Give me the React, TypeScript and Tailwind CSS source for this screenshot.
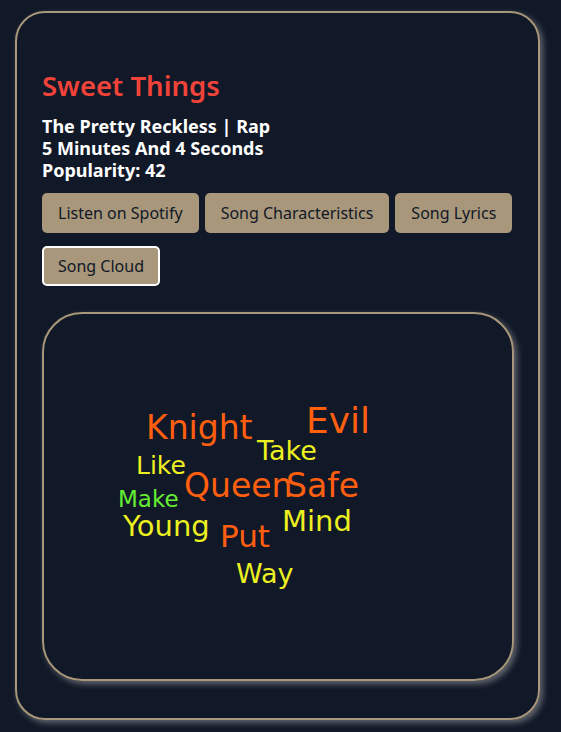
const words = [
  { text: 'Knight', left: 102, top: 97, size: 33, color: 'text-[#ff5f0f]' },
  { text: 'Evil', left: 262, top: 89, size: 36, color: 'text-[#ff5f0f]' },
  { text: 'Take', left: 213, top: 123, size: 27, color: 'text-[#ecf020]' },
  { text: 'Like', left: 92, top: 139, size: 25, color: 'text-[#ecf020]' },
  { text: 'Queen', left: 140, top: 155, size: 33, color: 'text-[#ff5f0f]' },
  { text: 'Safe', left: 242, top: 155, size: 33, color: 'text-[#ff5f0f]' },
  { text: 'Make', left: 74, top: 174, size: 23, color: 'text-[#66ee33]' },
  { text: 'Young', left: 79, top: 198, size: 29, color: 'text-[#ecf020]' },
  { text: 'Mind', left: 238, top: 193, size: 29, color: 'text-[#ecf020]' },
  { text: 'Put', left: 176, top: 207, size: 31, color: 'text-[#ff5f0f]' },
  { text: 'Way', left: 192, top: 246, size: 27, color: 'text-[#ecf020]' },
];

const buttons = ['Listen on Spotify', 'Song Characteristics', 'Song Lyrics'];

export default function App() {
  return (
    <div className="min-h-[732px] bg-[#111827] pt-[11px] pl-[15px] font-['Noto_Sans',sans-serif]">
      <div className="w-[525px] h-[709px] rounded-[30px] border-2 border-[#a8977a] shadow-[3px_3px_6px_rgba(200,200,200,0.45)] pl-[25px] pt-[56px]">
        <h1 className="text-[27.5px] font-semibold text-[#f2433a] leading-[34px]">Sweet Things</h1>
        <div className="mt-[12px] text-[18px] font-bold text-white leading-[22px]">
          <div>The Pretty Reckless | Rap</div>
          <div>5 Minutes And 4 Seconds</div>
          <div>Popularity: 42</div>
        </div>
        <div className="mt-[12px] flex flex-wrap gap-x-[6px] gap-y-[13px] w-[480px]">
          {buttons.map((b) => (
            <button
              key={b}
              className="h-[40px] px-[16px] rounded-[5px] bg-[#a8977a] text-[16px] text-[#111827]"
            >
              {b}
            </button>
          ))}
          <button className="h-[40px] px-[14px] rounded-[5px] bg-[#a8977a] text-[16px] text-[#111827] border-2 border-white">
            Song Cloud
          </button>
        </div>
        <div className="relative mt-[26px] w-[472px] h-[369px] rounded-[40px] border-2 border-[#a8977a] shadow-[3px_3px_6px_rgba(200,200,200,0.45)]">
          {words.map((w) => (
            <span
              key={w.text}
              className={`absolute leading-none font-['DejaVu_Sans',sans-serif] ${w.color}`}
              style={{ left: w.left, top: w.top, fontSize: w.size }}
            >
              {w.text}
            </span>
          ))}
        </div>
      </div>
    </div>
  );
}
